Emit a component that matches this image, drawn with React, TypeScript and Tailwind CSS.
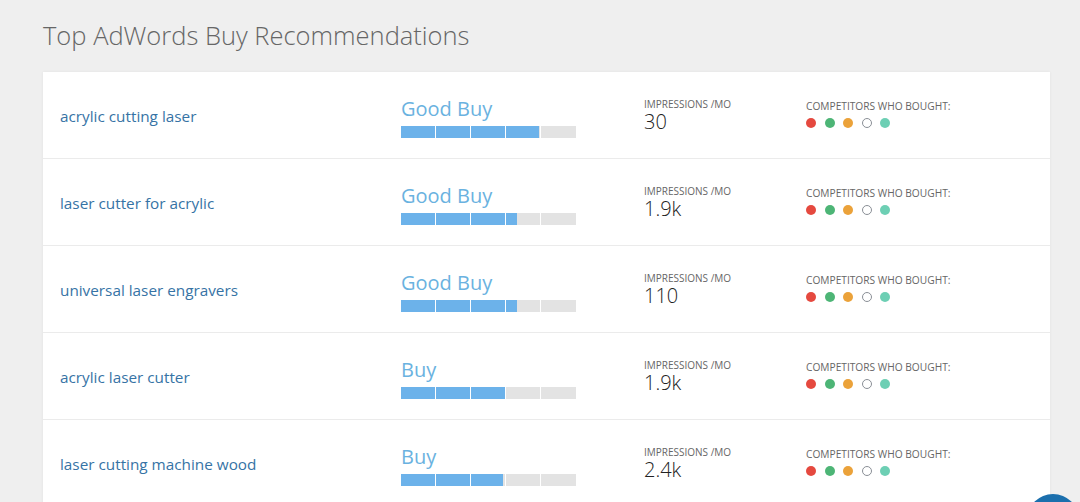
import React from 'react';

interface Recommendation {
  id: string;
  keyword: string;
  rating: string;
  score: number;
  impressions: string;
}

const recommendations: Recommendation[] = [
  { id: '1', keyword: 'acrylic cutting laser', rating: 'Good Buy', score: 79, impressions: '30' },
  { id: '2', keyword: 'laser cutter for acrylic', rating: 'Good Buy', score: 66, impressions: '1.9k' },
  { id: '3', keyword: 'universal laser engravers', rating: 'Good Buy', score: 66, impressions: '110' },
  { id: '4', keyword: 'acrylic laser cutter', rating: 'Buy', score: 60, impressions: '1.9k' },
  { id: '5', keyword: 'laser cutting machine wood', rating: 'Buy', score: 58, impressions: '2.4k' }
];

const ScoreBar: React.FC<{ score: number }> = ({ score }) => {
  return (
    <div className="relative w-[175px] h-[12px] bg-[#e3e3e3] overflow-hidden">
      <div className="absolute inset-y-0 left-0 bg-[#6cb2ea]" style={{ width: `${score}%` }} />
      {/* segment dividers */}
      <div className="absolute inset-0 flex">
        {[0, 1, 2, 3, 4].map((i) => (
          <div key={i} className="w-[35px] h-full border-r border-white last:border-r-0" />
        ))}
      </div>
    </div>
  );
};

const Dots: React.FC = () => {
  return (
    <div className="flex items-center gap-[8.5px]">
      <span className="w-[10px] h-[10px] rounded-full bg-[#e5493f]" />
      <span className="w-[10px] h-[10px] rounded-full bg-[#4db576]" />
      <span className="w-[10px] h-[10px] rounded-full bg-[#eba23a]" />
      <span className="w-[10px] h-[10px] rounded-full border-[1.5px] border-[#8a8f96] bg-white" />
      <span className="w-[10px] h-[10px] rounded-full bg-[#6dcfb4]" />
    </div>
  );
};

const App: React.FC = () => {
  return (
    <div className="relative w-[1080px] h-[502px] overflow-hidden bg-[#efefef] font-['Open_Sans',sans-serif]">
      <div className="pl-[43px] pr-[30px]">
        <h1 className="pt-[17px] h-[72px] text-[25.5px] leading-[36px] font-light text-[#666]">
          Top AdWords Buy Recommendations
        </h1>

        <div className="w-[1007px] bg-white shadow-[0_0_3px_rgba(0,0,0,0.06)]">
          {recommendations.map((rec) => (
            <div key={rec.id} className="flex items-center h-[87px] pl-[17px] border-b border-[#ebebeb]">
              <div className="w-[341px] text-[15.3px] text-[#3673a5] pt-[2px]">{rec.keyword}</div>

              <div className="w-[243px] flex flex-col gap-[4px] mt-[4px]">
                <div className="text-[20px] leading-[26px] text-[#6ab2e0]">{rec.rating}</div>
                <ScoreBar score={rec.score} />
              </div>

              <div className="w-[162px] flex flex-col mt-[1px]">
                <div className="text-[10px] leading-[13px] uppercase text-[#666]">Impressions /Mo</div>
                <div className="text-[20px] leading-[22px] font-light text-[#222]">{rec.impressions}</div>
              </div>

              <div className="flex flex-col gap-[5px] -mt-[3px]">
                <div className="text-[10.2px] leading-[13px] uppercase text-[#666]">Competitors who bought:</div>
                <Dots />
              </div>
            </div>
          ))}
        </div>
      </div>

      {/* chat bubble */}
      <div className="absolute left-[1027px] top-[494px] w-[52px] h-[52px] rounded-full bg-[#1b6fad]" />
    </div>
  );
};

export default App;
